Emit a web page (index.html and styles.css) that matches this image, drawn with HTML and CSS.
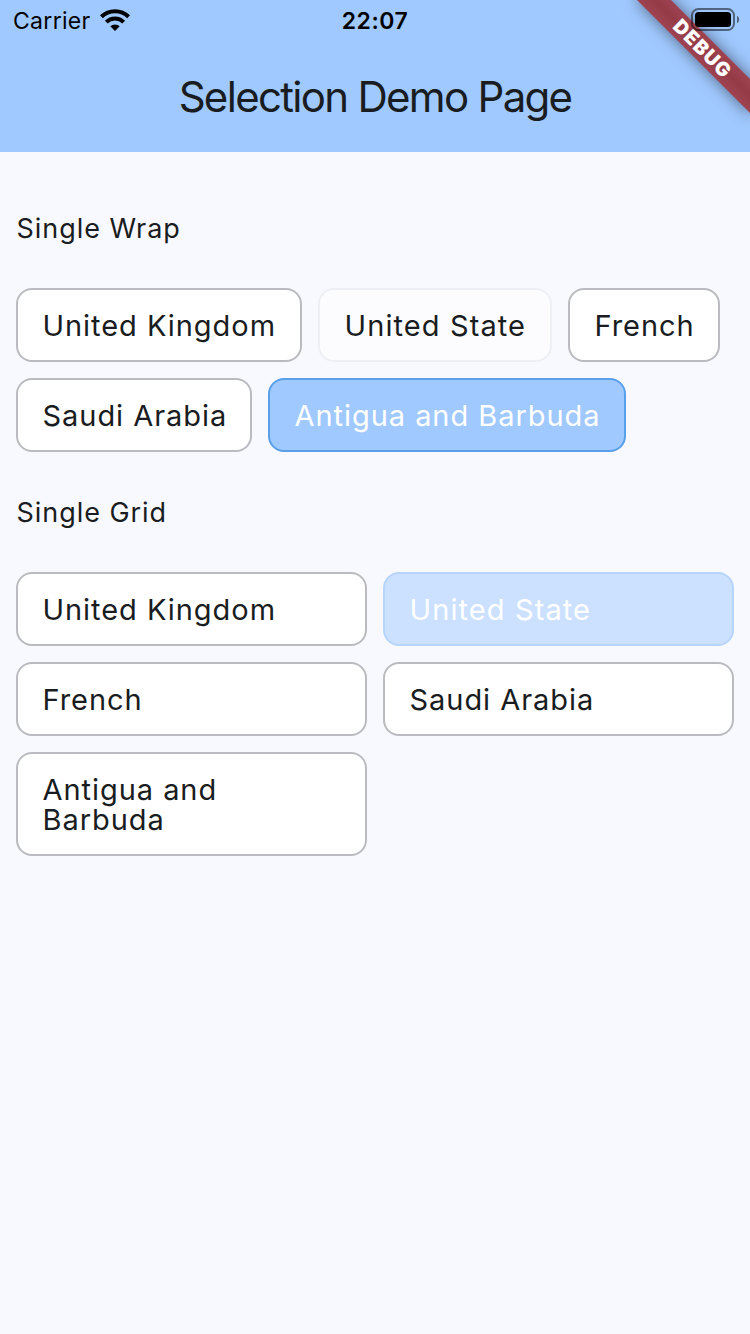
FILE: index.html
```html
<!DOCTYPE html>
<html lang="en">
<head>
<meta charset="utf-8">
<title>Selection Demo Page</title>
<link rel="stylesheet" href="styles.css">
</head>
<body>
<div class="screen">
  <header class="app-bar">
    <div class="status-bar">
      <div class="status-left">
        <span class="carrier">Carrier</span>
        <svg class="wifi" width="30" height="22" viewBox="0 0 30 22">
          <g fill="none" stroke="#000" stroke-width="4">
            <path d="M1.4 7.7A19.4 19.4 0 0 1 28.6 7.7"/>
            <path d="M6.3 13.1A12.2 12.2 0 0 1 23.7 13.1"/>
          </g>
          <path d="M15 22L10.3 17.3A6.8 6.8 0 0 1 19.7 17.3Z"/>
        </svg>
      </div>
      <span class="clock">22:07</span>
      <svg class="battery" width="50" height="24" viewBox="0 0 50 24">
        <rect x="2" y="1" width="42" height="21" rx="6.5" fill="none" stroke="#000" stroke-opacity=".5" stroke-width="2"/>
        <rect x="5" y="4" width="36" height="15" rx="3.5"/>
        <path d="M47 7.8Q49.2 9 49.2 11.5T47 15.2Z" fill-opacity=".5"/>
      </svg>
    </div>
    <h1 class="title">Selection Demo Page</h1>
    <div class="banner"><span class="banner-text">DEBUG</span></div>
  </header>
  <main class="content">
    <h2 class="section-label">Single Wrap</h2>
    <div class="wrap">
      <div class="chip chip-uk">United Kingdom</div>
      <div class="chip chip-us disabled">United State</div>
      <div class="chip chip-fr">French</div>
      <div class="chip chip-sa">Saudi Arabia</div>
      <div class="chip chip-ab selected">Antigua and Barbuda</div>
    </div>
    <h2 class="section-label">Single Grid</h2>
    <div class="grid">
      <div class="chip">United Kingdom</div>
      <div class="chip selected-disabled">United State</div>
      <div class="chip">French</div>
      <div class="chip">Saudi Arabia</div>
      <div class="chip">Antigua and Barbuda</div>
    </div>
  </main>
</div>
</body>
</html>
```
FILE: styles.css
```css
* { box-sizing: border-box; }
body {
  margin: 0;
  background: #f8f9ff;
  color: #191c20;
  font-family: Inter, "Liberation Sans", sans-serif;
}
.screen { width: 750px; height: 1334px; overflow: hidden; }
.app-bar {
  position: relative;
  height: 152px;
  background: #a0c9ff;
}
.status-bar {
  display: grid;
  grid-template-columns: 1fr auto 1fr;
  align-items: center;
  height: 40px;
  padding: 0 10px 0 13px;
  color: #000;
}
.status-left { display: flex; align-items: center; gap: 9px; }
.carrier { padding-top: 2px; font-size: 23px; letter-spacing: .3px; }
.clock { padding: 2px 3px 0 0; font-size: 23px; font-weight: 600; letter-spacing: .5px; }
.battery { position: relative; z-index: 2; justify-self: end; }
.title {
  margin: 0;
  padding-top: 1px;
  font-size: 42px;
  font-weight: 400;
  line-height: 112px;
  height: 112px;
  text-align: center;
  letter-spacing: -1.7px;
}
.banner {
  position: absolute;
  z-index: 1;
  left: 622px;
  top: 36px;
  width: 160px;
  height: 24px;
  transform: rotate(45deg);
  background: linear-gradient(#9f4351, #943a47 50%, #9f4351);
  box-shadow: 0 0 16px rgba(0, 0, 0, .5);
}
.banner-text {
  display: block;
  padding-left: 2px;
  color: #fff;
  font-size: 19.5px;
  font-weight: 900;
  line-height: 24px;
  text-align: center;
  letter-spacing: 1.2px;
}
.content { padding: 61px 16px 0; }
.section-label {
  margin: 0;
  height: 75px;
  padding-left: .5px;
  font-size: 27px;
  font-weight: 400;
  line-height: 32px;
  letter-spacing: .95px;
}
.wrap { display: flex; flex-wrap: wrap; gap: 16px; margin-bottom: 45px; }
.grid {
  display: grid;
  grid-template-columns: 1fr 1fr;
  gap: 16px;
}
.chip {
  padding: 21px 24px 19px 24.5px;
  border: 2px solid #babbbf;
  border-radius: 16px;
  background: #fff;
  font-size: 29px;
  font-weight: 400;
  line-height: 30px;
  letter-spacing: .95px;
}
.wrap .chip { white-space: nowrap; }
.chip-uk { width: 286px; }
.chip-us { width: 234px; }
.chip-fr { width: 152px; }
.chip-sa { width: 236px; }
.chip-ab { width: 358px; }
.disabled { background: #fcfcff; border-color: #eeeff4; letter-spacing: 1.1px; }
.selected { background: #a0c9ff; border-color: #599fe9; color: #fff; }
.selected-disabled { background: #cce1ff; border-color: #b7d5fb; color: #fff; letter-spacing: 1.1px; }
```
